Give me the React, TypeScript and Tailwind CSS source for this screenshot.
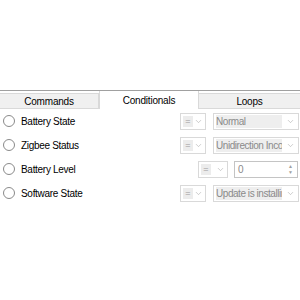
import { ChevronDown } from "lucide-react";

const font = { fontFamily: '"Liberation Sans", Arial, sans-serif' };

function Radio() {
  return (
    <span className="w-[12px] h-[12px] rounded-full border border-[#8a8a8a] bg-white shrink-0" />
  );
}

function OpCombo({ wide = false }: { wide?: boolean }) {
  return (
    <div
      className={
        wide
          ? "h-[17px] w-[30px] border border-[#d9d9d9] bg-white flex items-center px-[2px]"
          : "h-[17px] w-[26px] border border-[#d9d9d9] bg-white flex items-center px-[2px]"
      }
    >
      <span className="h-[11px] w-[10px] bg-[#ececec] text-[9px] leading-[11px] text-[#9a9a9a] flex items-center justify-center">
        =
      </span>
      <ChevronDown className="ml-auto w-[9px] h-[9px] text-[#a8a8a8]" strokeWidth={1.5} />
    </div>
  );
}

function ValueCombo({ text }: { text: string }) {
  return (
    <div className="h-[17px] w-[86px] border border-[#d9d9d9] bg-white flex items-center pl-[2px] pr-[3px]">
      <span className="h-[13px] flex-1 bg-[#eeeeee] text-[10px] tracking-[-0.45px] leading-[13px] text-[#8a8a8a] whitespace-nowrap overflow-hidden">
        {text}
      </span>
      <ChevronDown className="ml-[4px] w-[9px] h-[9px] text-[#a8a8a8]" strokeWidth={1.5} />
    </div>
  );
}

function NumberBox() {
  return (
    <div className="h-[17px] w-[64px] border border-[#c4c4c4] bg-white flex items-center pl-[3px] pr-[2px]">
      <span className="flex-1 text-[10px] leading-[13px] text-[#8a8a8a]">0</span>
      <div className="flex flex-col items-center justify-center w-[9px] h-[13px] text-[#a0a0a0] text-[5px] leading-[6px]">
        <span>▲</span>
        <span>▼</span>
      </div>
    </div>
  );
}

const rows = [
  { label: "Battery State", value: "Normal" },
  { label: "Zigbee Status", value: "Unidirection Incon" },
  { label: "Battery Level", value: null },
  { label: "Software State", value: "Update is installing" },
];

export default function App() {
  return (
    <div className="w-[300px] h-[300px] bg-white overflow-hidden" style={font}>
      <div className="h-[90px]" />
      {/* tab strip */}
      <div className="border-t border-[#a0a0a0] flex text-[10px] tracking-[-0.2px] text-black">
        <div className="w-[99px] mt-[2px] h-[16px] border border-[#d9d9d9] border-l-0 bg-[#f0f0f0] flex items-center justify-center">
          Commands
        </div>
        <div className="w-[100px] h-[18px] bg-white border-x border-[#d9d9d9] flex items-center justify-center">
          Conditionals
        </div>
        <div className="flex-1 mt-[2px] h-[16px] border border-[#d9d9d9] border-l-0 border-r-0 bg-[#f0f0f0] flex items-center justify-center">
          Loops
        </div>
      </div>
      {/* rows */}
      <div>
        {rows.map((r) => (
          <div key={r.label} className="h-[24px] flex items-center pl-[3px] pr-[1px]">
            <Radio />
            <span className="ml-[6px] text-[10px] tracking-[-0.3px] text-black">{r.label}</span>
            <div className="ml-auto flex items-center">
              {r.value === null ? (
                <>
                  <OpCombo wide />
                  <div className="w-[6px]" />
                  <NumberBox />
                  <div className="w-[1px]" />
                </>
              ) : (
                <>
                  <OpCombo />
                  <div className="w-[7px]" />
                  <ValueCombo text={r.value} />
                </>
              )}
            </div>
          </div>
        ))}
      </div>
    </div>
  );
}
